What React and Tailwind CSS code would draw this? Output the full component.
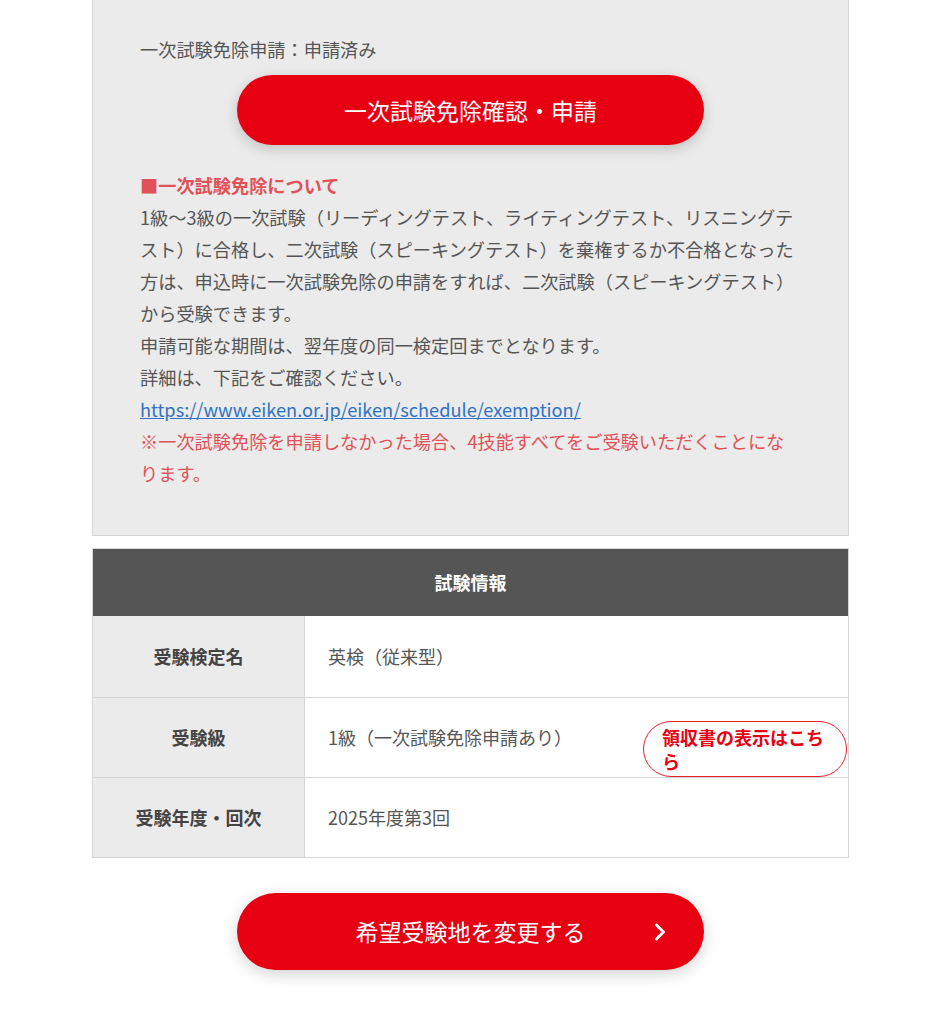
import React from "react";
import { ChevronRight } from "lucide-react";

const rows = [
  { label: "受験検定名", value: "英検（従来型）" },
  { label: "受験級", value: "1級（一次試験免除申請あり）", receipt: true },
  { label: "受験年度・回次", value: "2025年度第3回" },
];

const App = () => {
  return (
    <div
      className="min-h-[1024px] w-full bg-white pb-[54px]"
      style={{ fontFamily: '"Noto Sans CJK JP", "Noto Sans", sans-serif' }}
    >
      <div className="mx-[92px] border-x border-b border-[#d6d6d6] bg-[#ebebeb] px-[47px] pt-[35px] pb-[46px]">
        <p className="text-[18.2px] leading-[28px] text-[#555]">一次試験免除申請：申請済み</p>

        <div className="mt-[12px] flex justify-center">
          <button className="h-[70px] w-[467px] rounded-full bg-[#e60012] text-[23px] font-normal text-white shadow-[0_4px_14px_rgba(0,0,0,0.18)]">
            一次試験免除確認・申請
          </button>
        </div>

        <div className="mt-[24px] text-[18.2px] leading-[32px] text-[#555]">
          <p className="font-bold text-[#e05258]">■一次試験免除について</p>
          <p>
            1級〜3級の一次試験（リーディングテスト、ライティングテスト、リスニングテ
            <br />
            スト）に合格し、二次試験（スピーキングテスト）を棄権するか不合格となった
            <br />
            方は、申込時に一次試験免除の申請をすれば、二次試験（スピーキングテスト）
            <br />
            から受験できます。
          </p>
          <p>申請可能な期間は、翌年度の同一検定回までとなります。</p>
          <p>詳細は、下記をご確認ください。</p>
          <p>
            <a href="#" className="text-[#2f73c4] underline">
              https://www.eiken.or.jp/eiken/schedule/exemption/
            </a>
          </p>
          <p className="text-[#e05258]">
            ※一次試験免除を申請しなかった場合、4技能すべてをご受験いただくことにな
            <br />
            ります。
          </p>
        </div>
      </div>

      <div className="mx-[92px] mt-[12px] border border-[#d6d6d6]">
        <div className="flex h-[67px] items-center justify-center bg-[#555] text-[18px] font-bold text-white">
          試験情報
        </div>
        {rows.map((row, i) => (
          <div
            key={row.label}
            className={`flex ${i === 0 ? "h-[81px]" : "h-[80px] border-t border-[#d6d6d6]"}`}
          >
            <div className="flex w-[212px] shrink-0 items-center justify-center border-r border-[#d6d6d6] bg-[#ebebeb] text-[18px] font-bold text-[#444]">
              {row.label}
            </div>
            <div className="relative flex flex-1 items-center pl-[23px] text-[18px] text-[#555]">
              {row.value}
              {row.receipt && (
                <a
                  href="#"
                  className="absolute right-[1px] bottom-[0px] w-[204px] rounded-full border border-[#e8202a] bg-white py-[3px] pl-[18px] pr-[12px] text-[18px] leading-[24px] font-bold text-[#e60012]"
                >
                  領収書の表示はこちら
                </a>
              )}
            </div>
          </div>
        ))}
      </div>

      <div className="mt-[35px] flex justify-center">
        <button className="relative flex h-[77px] w-[467px] items-center justify-center rounded-full bg-[#e60012] text-[23px] font-normal text-white shadow-[0_4px_16px_rgba(0,0,0,0.18)]">
          希望受験地を変更する
          <ChevronRight className="absolute right-[30px] h-[28px] w-[28px]" strokeWidth={2.5} />
        </button>
      </div>
    </div>
  );
};

export default App;
